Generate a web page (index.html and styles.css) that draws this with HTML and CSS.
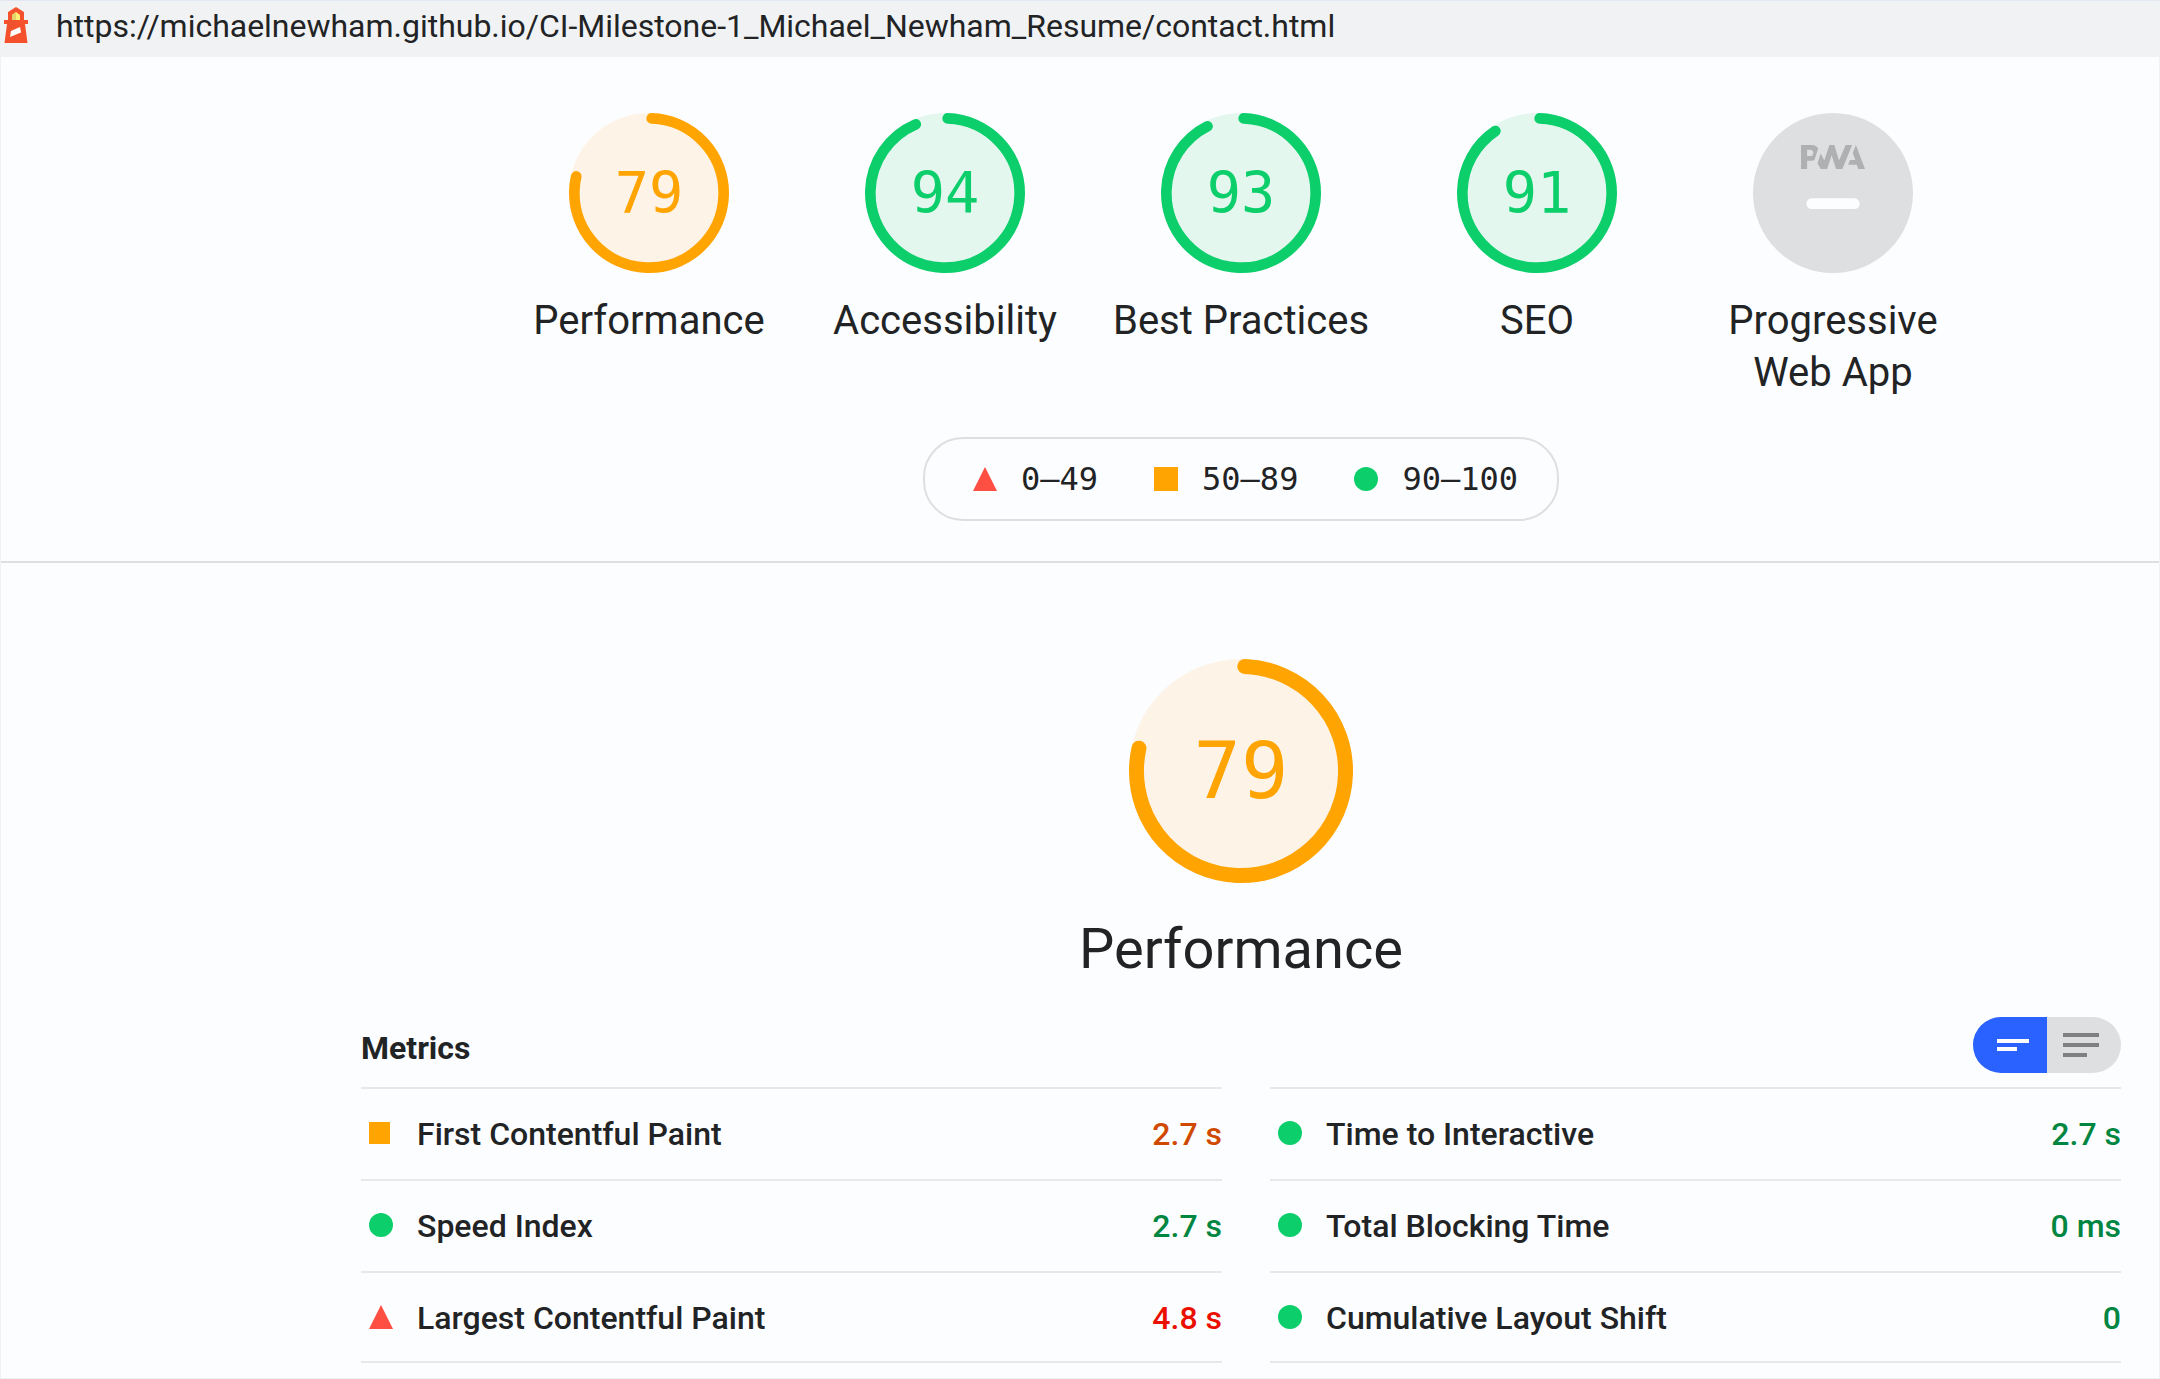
FILE: index.html
```html
<!DOCTYPE html>
<html lang="en">
<head>
<meta charset="utf-8">
<title>Lighthouse Report</title>
<link rel="stylesheet" href="styles.css">
</head>
<body>
<div class="report">
  <header class="topbar">
    <svg class="topbar-logo" viewBox="0 0 24 36"><path fill="#f4512c" d="M12 0l8 5v8h4v4h-3l2.500 19H.5L3 17H0v-4h4V5z"/><path fill="#e8522f" d="M4 13h8v4l-9 7 1-7z" opacity=".6"/><path fill="#fff176" d="M8 13V8l4-3 4 3v5z"/><path fill="#e3d268" d="M8 13V8l4-3v8z"/><path fill="#fff" d="M7 24l9-4 1 5.500L6 30z"/></svg>
    <span class="topbar-url">https://michaelnewham.github.io/CI-Milestone-1_Michael_Newham_Resume/contact.html</span>
  </header>
  <section class="summary">
    <div class="gauges">
      <div class="gauge average"><div class="dial"><svg viewBox="0 0 120 120"><circle class="base" r="60" cx="60" cy="60"/><circle class="arc" r="56" cx="60" cy="60" stroke-dasharray="273.97 351.86"/></svg><span class="score">79</span></div><div class="name">Performance</div></div>
      <div class="gauge pass"><div class="dial"><svg viewBox="0 0 120 120"><circle class="base" r="60" cx="60" cy="60"/><circle class="arc" r="56" cx="60" cy="60" stroke-dasharray="326.75 351.86"/></svg><span class="score">94</span></div><div class="name">Accessibility</div></div>
      <div class="gauge pass"><div class="dial"><svg viewBox="0 0 120 120"><circle class="base" r="60" cx="60" cy="60"/><circle class="arc" r="56" cx="60" cy="60" stroke-dasharray="323.23 351.86"/></svg><span class="score">93</span></div><div class="name">Best Practices</div></div>
      <div class="gauge pass"><div class="dial"><svg viewBox="0 0 120 120"><circle class="base" r="60" cx="60" cy="60"/><circle class="arc" r="56" cx="60" cy="60" stroke-dasharray="316.19 351.86"/></svg><span class="score">91</span></div><div class="name">SEO</div></div>
      <div class="gauge"><div class="dial"><svg viewBox="0 0 60 60"><circle fill="#dedfe1" cx="30" cy="30" r="30"/><g fill="#afb0b2"><path d="M35.66 19.39l.7-1.75h2L37.4 15 38.6 12l3.4 9h-2.51l-.58-1.61z"/><path d="M33.52 21l3.65-9h-2.42l-2.5 5.82L30.5 12h-1.86l-1.9 5.82-1.35-2.65-1.21 3.72L25.4 21h2.38l1.72-5.2 1.64 5.2z"/><path fill-rule="nonzero" d="M20.3 17.91h1.48c.45 0 .85-.05 1.2-.15l.39-1.18 1.07-3.3a2.64 2.64 0 0 0-.28-.37c-.55-.6-1.36-.91-2.42-.91H18v9h2.3V17.9zm1.96-3.84c.22.22.33.5.33.87 0 .36-.1.65-.29.87-.2.23-.59.35-1.15.35h-.86v-2.41h.87c.52 0 .89.1 1.1.32z"/></g><rect fill="#fcfdff" x="20" y="32" width="20" height="4" rx="2"/></svg></div><div class="name">Progressive<br>Web App</div></div>
    </div>
    <div class="legend">
      <span class="range"><svg class="mark" viewBox="0 0 24 24"><path fill="#ff4e42" d="M12 0l12 24H0z"/></svg>0–49</span>
      <span class="range"><svg class="mark" viewBox="0 0 24 24"><path fill="#ffa400" d="M0 0h24v24H0z"/></svg>50–89</span>
      <span class="range"><svg class="mark" viewBox="0 0 24 24"><circle fill="#0cce6b" cx="12" cy="12" r="12"/></svg>90–100</span>
    </div>
  </section>
  <main class="category">
    <div class="gauge large average"><div class="dial"><svg viewBox="0 0 120 120"><circle class="base" r="60" cx="60" cy="60"/><circle class="arc" r="56" cx="60" cy="60" stroke-dasharray="273.97 351.86"/></svg><span class="score">79</span></div><div class="name">Performance</div></div>
    <div class="metrics-head">
      <h2 class="metrics-title">Metrics</h2>
      <div class="toggle">
        <div class="toggle-side on"><svg viewBox="0 0 74 56"><path fill="#fff" d="M24 22h32v4H24zM24 30h20v4H24z"/></svg></div>
        <div class="toggle-side"><svg viewBox="0 0 74 56"><path fill="#7f8081" d="M16 16h36v4H16zM16 26h36v4H16zM16 36h24v4H16z"/></svg></div>
      </div>
    </div>
    <div class="metrics">
      <div class="column">
        <div class="metric"><svg class="mark" viewBox="0 0 24 24"><path fill="#ffa400" d="M0 1h21v22H0z"/></svg><span class="metric-name">First Contentful Paint</span><span class="value value-average">2.7 s</span></div>
        <div class="metric"><svg class="mark" viewBox="0 0 24 24"><circle fill="#0cce6b" cx="12" cy="12" r="12"/></svg><span class="metric-name">Speed Index</span><span class="value value-pass">2.7 s</span></div>
        <div class="metric"><svg class="mark" viewBox="0 0 24 24"><path fill="#ff4e42" d="M12 0l12 24H0z"/></svg><span class="metric-name">Largest Contentful Paint</span><span class="value value-fail">4.8 s</span></div>
      </div>
      <div class="column">
        <div class="metric"><svg class="mark" viewBox="0 0 24 24"><circle fill="#0cce6b" cx="12" cy="12" r="12"/></svg><span class="metric-name">Time to Interactive</span><span class="value value-pass">2.7 s</span></div>
        <div class="metric"><svg class="mark" viewBox="0 0 24 24"><circle fill="#0cce6b" cx="12" cy="12" r="12"/></svg><span class="metric-name">Total Blocking Time</span><span class="value value-pass">0 ms</span></div>
        <div class="metric"><svg class="mark" viewBox="0 0 24 24"><circle fill="#0cce6b" cx="12" cy="12" r="12"/></svg><span class="metric-name">Cumulative Layout Shift</span><span class="value value-pass">0</span></div>
      </div>
    </div>
  </main>
</div>
</body>
</html>
```
FILE: styles.css
```css
* { box-sizing: border-box; }
body { margin: 0; background: #fcfdff; color: #212325; font-family: Roboto, sans-serif; font-size: 32px; }
svg { display: block; }
.report { height: 1379px; overflow: hidden; border: 1px solid #eef1f6; border-top-color: #e3e9f1; }
.topbar { display: flex; align-items: flex-start; height: 56px; padding-left: 3px; background: #f1f2f4; }
.topbar-logo { width: 24px; height: 36px; margin-top: 6px; flex: none; }
.topbar-url { margin-left: 28px; margin-top: 6px; line-height: 38px; white-space: nowrap; letter-spacing: -.015px; }
.summary { height: 506px; padding: 56px 38px 0 360px; border-bottom: 2px solid #dedfe1; }
.gauges { display: flex; justify-content: center; height: 324px; }
.gauge { display: flex; flex-direction: column; align-items: center; width: 296px; }
.dial { display: grid; width: 160px; height: 160px; }
.dial > * { grid-area: 1 / 1; }
.base { fill: #e4f7ef; }
.average .base { fill: #fdf3e7; }
.arc { fill: none; stroke: currentColor; stroke-width: 8; stroke-linecap: round; transform: rotate(-87.95deg); transform-origin: 60px 60px; }
.average { color: #ffa400; }
.pass { color: #0cce6b; }
.score { place-self: center; font: 57px/68px "DejaVu Sans Mono", monospace; }
.name { margin-top: 22px; font-size: 40px; line-height: 52px; text-align: center; color: #212325; }
.legend { display: flex; align-items: center; gap: 56px; width: 636px; height: 84px; margin: 0 auto; padding-left: 48px; border: 2px solid #dedfe1; border-radius: 40px; font-family: "DejaVu Sans Mono", monospace; }
.range { display: flex; align-items: center; gap: 24px; line-height: 40px; }
.mark { width: 24px; height: 24px; flex: none; }
.category { padding: 96px 38px 0 360px; }
.large { margin: 0 auto; width: 400px; height: 358px; }
.large .dial { width: 224px; height: 224px; }
.large .score { font-size: 78.8px; line-height: 94px; }
.large .name { margin-top: 30px; font-size: 56px; line-height: 72px; }
.metrics-head { display: flex; justify-content: space-between; height: 70px; }
.metrics-title { margin: 11px 0 0; font-size: 32px; line-height: 40px; font-weight: 700; }
.toggle { display: flex; width: 148px; height: 56px; border-radius: 28px; overflow: hidden; background: #dedfe1; }
.toggle-side { width: 74px; }
.on { background: #2962ff; }
.metrics { display: grid; grid-template-columns: 861px 851px; gap: 48px; }
.column { border-bottom: 2px solid #e7e8ea; }
.metric { display: flex; align-items: flex-start; height: 92px; padding: 32px 0 0 8px; border-top: 2px solid #e7e8ea; font-weight: 500; }
.metric:last-child { height: 90px; }
.metric-name { margin-left: 24px; line-height: 40px; margin-top: -7px; flex: 1; }
.value { line-height: 40px; margin-top: -7px; }
.value-pass { color: #018642; }
.value-average { color: #d04900; }
.value-fail { color: #eb0f00; }
```
